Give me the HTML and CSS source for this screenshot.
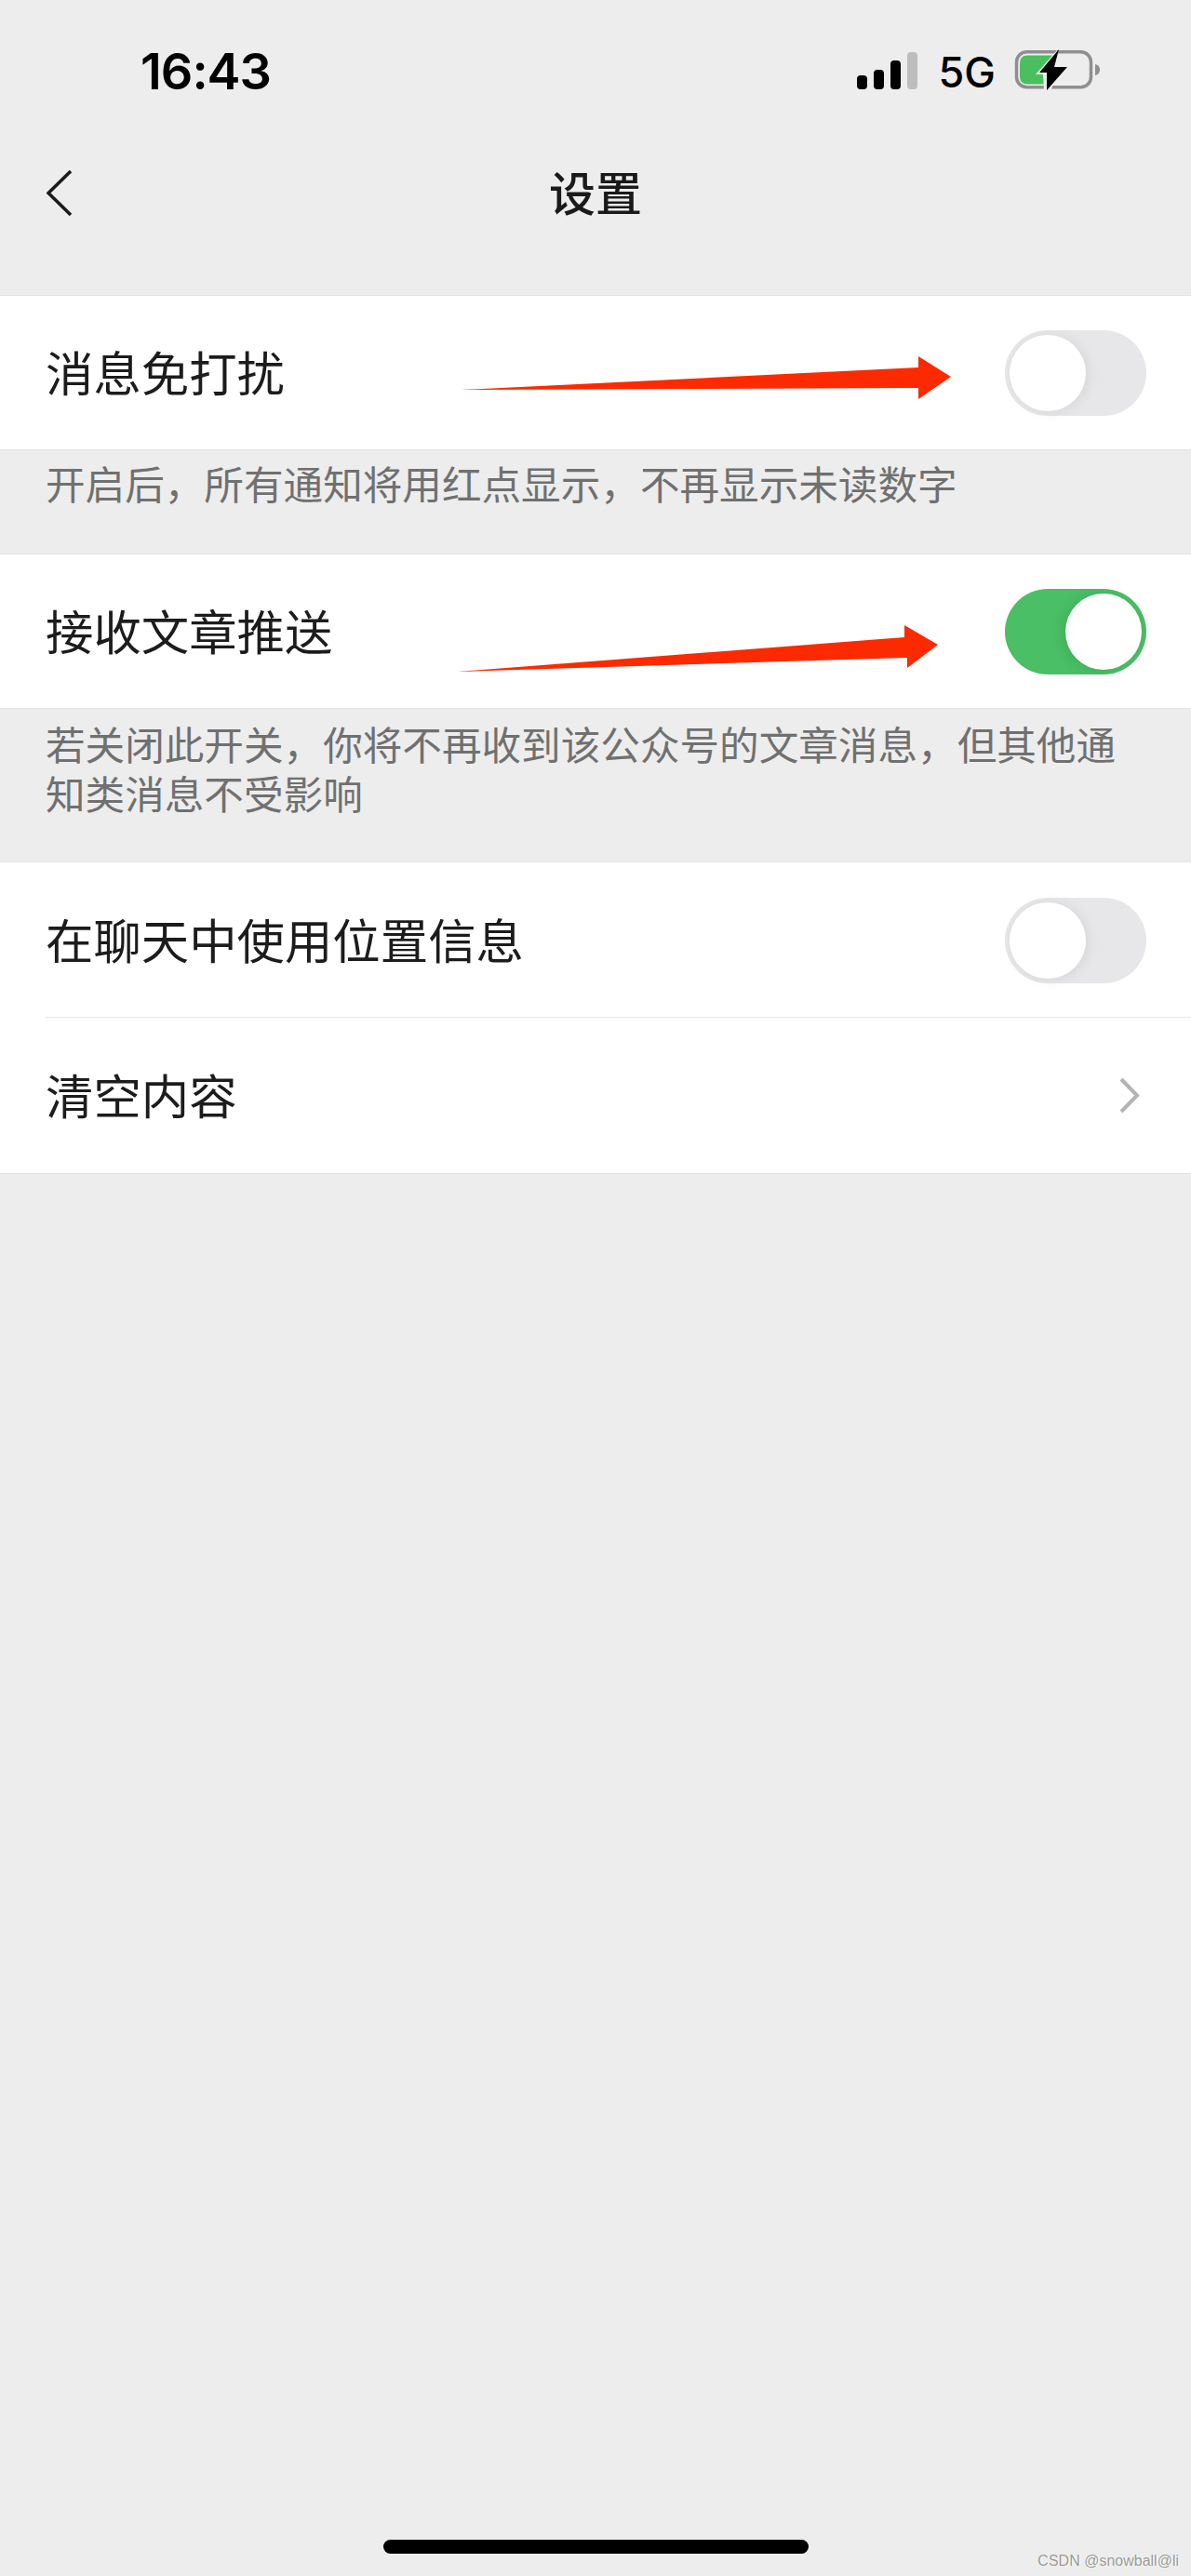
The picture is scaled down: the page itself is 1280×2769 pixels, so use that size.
FILE: index.html
```html
<!DOCTYPE html>
<html lang="zh-CN">
<head>
<meta charset="UTF-8">
<title>设置</title>
<meta name="viewport" content="width=device-width,initial-scale=1">
<link rel="stylesheet" href="styles.css">
</head>
<body>
<div class="page">
  <!-- status bar -->
  <div class="status">
    <span class="time">16:43</span>
    <div class="status-right">
      <svg class="signal" viewBox="0 0 65 40" aria-label="signal">
        <rect x="0" y="25" width="11" height="15" rx="4" fill="#000"/>
        <rect x="18" y="19" width="11" height="21" rx="4" fill="#000"/>
        <rect x="36" y="9" width="11" height="31" rx="4" fill="#000"/>
        <rect x="54" y="0" width="11" height="40" rx="4" fill="#bdbdbd"/>
      </svg>
      <span class="net">5G</span>
      <svg class="battery" viewBox="0 0 94 46" aria-label="battery">
        <rect x="3.5" y="3.8" width="80" height="38" rx="11" fill="none" stroke="#8f8f8f" stroke-width="3.5"/>
        <path d="M88 17 q5 1 5 6 t-5 6 z" fill="#8f8f8f"/>
        <path d="M15 7.500 H42 V38.500 H15 Q7 38.500 7 30 V16 Q7 7.500 15 7.500 Z" fill="#4abf5f"/>
        <path d="M47 2 L24 28 H32 L33 46 L40 46 L50 22 Z" fill="#ededed"/>
        <path d="M49 1 L28 26 H36 L36 45 L58 20 H44 Z" fill="#000"/>
      </svg>
    </div>
  </div>

  <!-- nav -->
  <div class="nav">
    <svg class="back" viewBox="0 0 28 51" aria-label="back">
      <path d="M26 2 L2 25.5 L26 49" fill="none" stroke="#1a1a1a" stroke-width="3.6"/>
    </svg>
    <div class="nav-title">设置</div>
    <span></span>
  </div>

  <div class="row">
    <span>消息免打扰</span>
    <div class="toggle"><i class="knob"></i></div>
    <svg class="arrow" viewBox="0 318 1280 165" aria-hidden="true">
      <polygon points="496,419 987,395 987,383 1022,405 987,429 987,417" fill="#fc2a00"/>
    </svg>
  </div>
  <p class="note">开启后，所有通知将用红点显示，不再显示未读数字</p>

  <div class="row">
    <span>接收文章推送</span>
    <div class="toggle on"><i class="knob"></i></div>
    <svg class="arrow" viewBox="0 596 1280 165" aria-hidden="true">
      <polygon points="492,722 972,685 972,672 1008,693 975,718 975,707" fill="#fc2a00"/>
    </svg>
  </div>
  <p class="note note-two">若关闭此开关，你将不再收到该公众号的文章消息，但其他通<br>知类消息不受影响</p>

  <div class="list">
    <div class="row">
      <span>在聊天中使用位置信息</span>
      <div class="toggle"><i class="knob"></i></div>
    </div>
    <div class="row">
      <span>清空内容</span>
      <svg class="more" viewBox="0 0 22 39" aria-label="more">
        <path d="M2 2 L19 19.5 L2 37" fill="none" stroke="#b4b4b4" stroke-width="4"/>
      </svg>
    </div>
  </div>

  <div class="home-bar"></div>
  <div class="watermark">CSDN @snowball@li</div>
</div>
</body>
</html>
```

FILE: styles.css
```css
:root{font-family:"Noto Sans CJK SC","Noto Sans",sans-serif}
body{margin:0;background:#ededed;color:#1a1a1a}

.page{position:relative;height:2769px;display:flex;flex-direction:column;overflow:hidden}

/* status bar */
.status{height:154px;box-sizing:border-box;padding:0 97px 0 151px;
        display:flex;justify-content:space-between;align-items:center}
.time{font-family:Inter,sans-serif;font-size:54px;font-weight:600;letter-spacing:-1px;color:#000;line-height:1}
.status-right{display:flex;align-items:center}
.signal{width:65px;height:40px;margin-bottom:3px}
.net{font-family:Inter,sans-serif;font-size:45px;font-weight:500;line-height:1;color:#000;
     margin-left:23px;margin-right:19px}
.battery{width:94px;height:46px;margin-bottom:4px}

/* nav */
.nav{height:106px;margin-bottom:58px;
     display:grid;grid-template-columns:1fr auto 1fr;align-items:center}
.back{width:28px;height:51px;margin-left:50px}
.nav-title{font-size:50px;font-weight:500;line-height:1;margin-bottom:5px}

/* rows */
.row{position:relative;height:165px;box-sizing:border-box;padding:0 48px 0 49px;background:#fff;
     display:flex;justify-content:space-between;align-items:center;
     font-size:51.4px;color:#1c1c1c;box-shadow:0 -1px 0 #e3e3e3,0 1px 0 #e3e3e3}
.row span{margin-bottom:4px}
.list{box-shadow:0 -1px 0 #e3e3e3,0 1px 0 #e3e3e3}
.list .row{height:167px;box-shadow:none}
.list .row:first-child::after{content:"";position:absolute;left:49px;right:0;bottom:0;height:1px;background:#e8e8e8}

.toggle{width:152px;height:92px;box-sizing:border-box;padding:5px 6px 5px 5px;border-radius:46px;
        background:#e7e7e9;display:flex}
.knob{width:82px;height:82px;border-radius:50%;background:#fff;box-shadow:3px 1px 14px rgba(0,0,0,.07)}
.toggle.on{background:#4abf65;justify-content:flex-end;padding-right:5px}
.toggle.on .knob{box-shadow:-3px 1px 14px rgba(0,0,0,.1)}

.more{width:22px;height:39px;margin-right:7px}

/* hand-drawn arrows on top of the screenshot */
.arrow{position:absolute;left:0;top:0;width:1280px;height:165px;pointer-events:none}

.note{margin:0;padding:9px 49px 51px;font-size:42.6px;line-height:53px;color:#707070}
.note-two{padding-top:11px;padding-bottom:49px}

.home-bar{width:457px;height:15px;border-radius:8px;background:#000;
          margin:auto 0 24px 412px}
.watermark{position:absolute;right:13px;bottom:8px;
           font-family:"Liberation Sans",sans-serif;font-size:16px;line-height:1;color:#9a9a9a;
           text-shadow:1px 0 0 #fff}
```
